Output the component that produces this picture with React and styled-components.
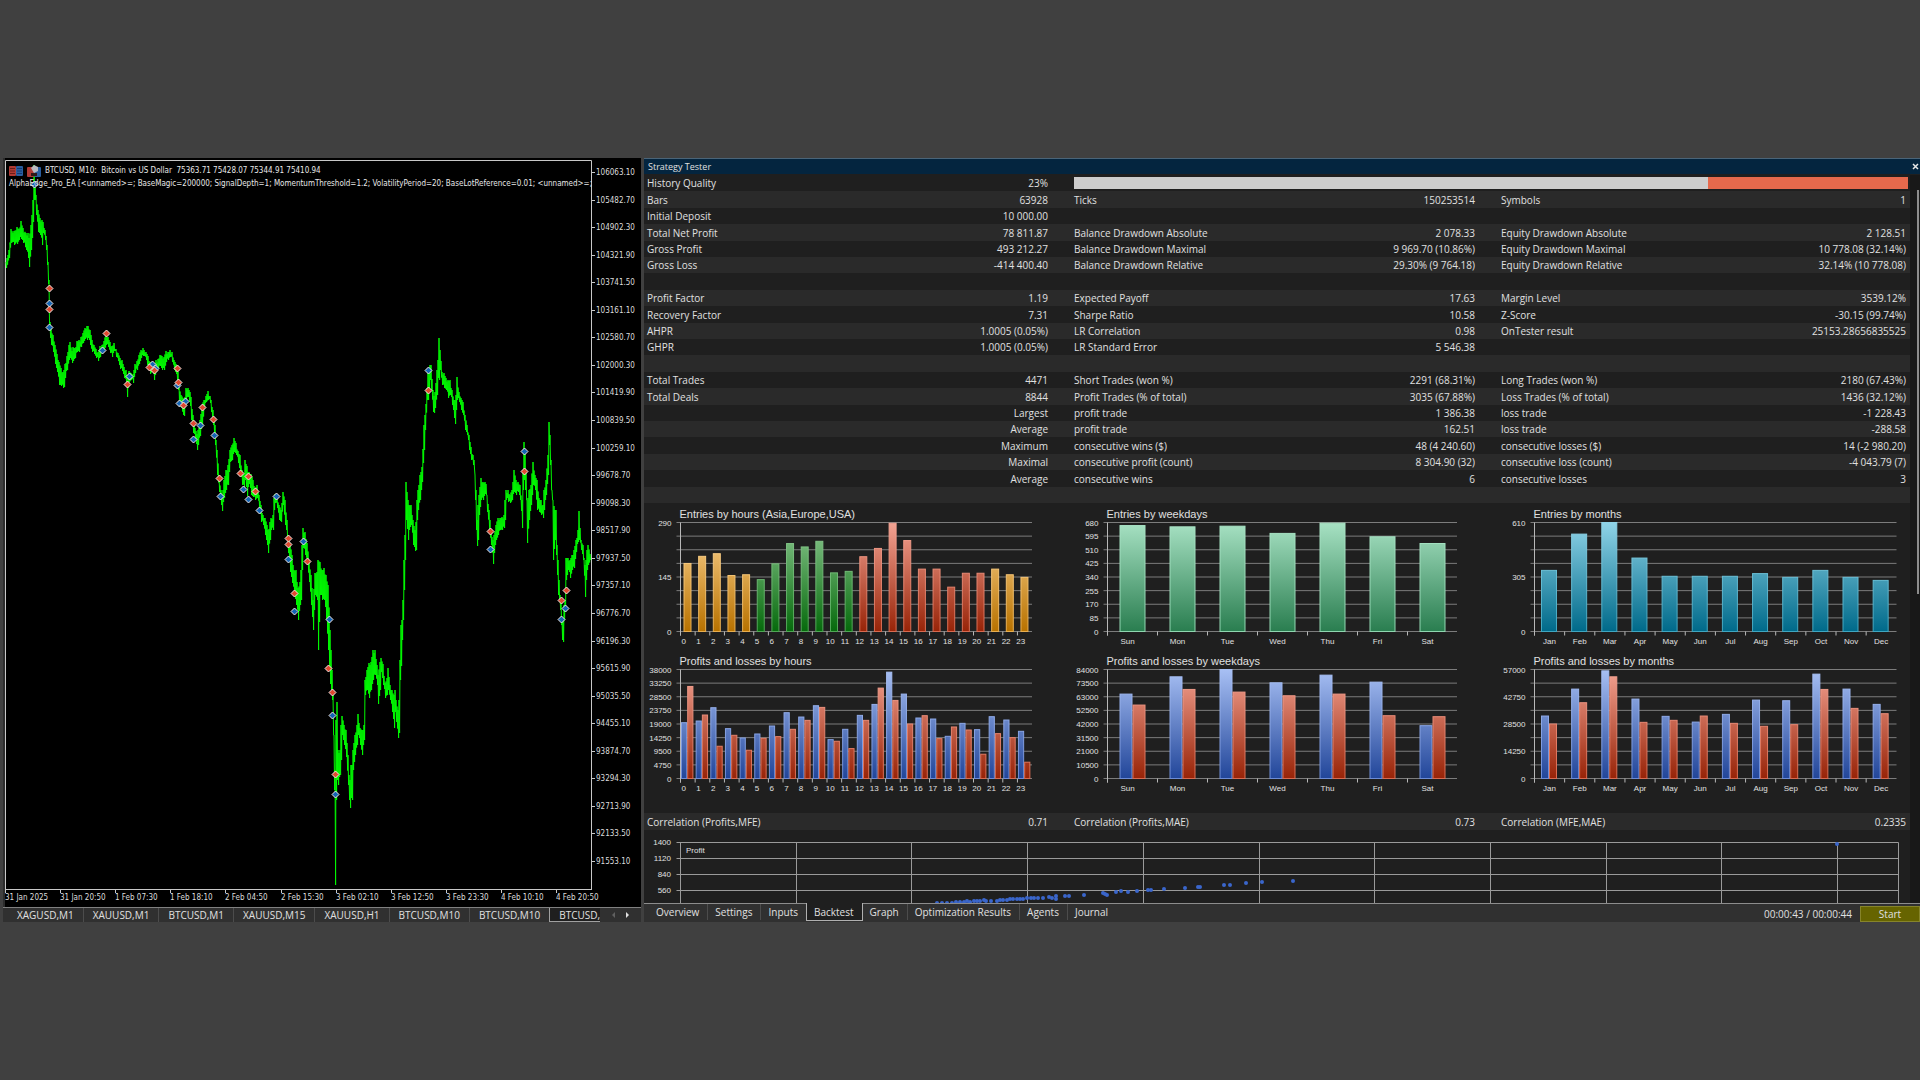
import React from 'react';
import styled, { createGlobalStyle } from 'styled-components';

const GlobalStyle = createGlobalStyle`
  * {
    box-sizing: border-box;
  }
  body {
    margin: 0;
    background: #404040;
    color: #e0e0e0;
    font-family: 'Open Sans', 'Noto Sans', sans-serif;
    font-size: 10px;
    line-height: 16px;
  }
`;

/* ---------- price chart data ---------- */

// x, high, low
const PRICE = [
  [6, 262, 268], [9, 250, 258], [11, 229, 243], [14, 231, 245], [17, 227, 244], [19, 229, 240],
  [21, 221, 239], [23, 228, 243], [26, 233, 250], [28, 233, 258], [29, 238, 267], [31, 225, 250],
  [32, 215, 238], [33, 200, 222], [34, 165, 200], [35, 183, 200], [36, 195, 215], [38, 210, 232],
  [40, 218, 235], [42, 220, 245], [43, 222, 233], [45, 230, 240], [46, 236, 250], [47, 245, 265],
  [48, 262, 284], [49, 280, 330], [50, 322, 338], [51, 326, 345], [53, 335, 352], [55, 345, 364],
  [57, 354, 372], [59, 362, 385], [61, 368, 386], [63, 372, 388], [64, 370, 387], [65, 364, 378],
  [67, 356, 370], [69, 345, 360], [70, 342, 358], [72, 351, 363], [73, 347, 361], [75, 348, 358],
  [77, 341, 352], [79, 340, 352], [81, 337, 347], [83, 333, 343], [85, 328, 339], [87, 326, 340],
  [88, 326, 338], [90, 330, 345], [92, 340, 352], [94, 345, 354], [96, 349, 358], [98, 352, 361],
  [100, 346, 357], [102, 345, 352], [104, 341, 350], [106, 334, 345], [108, 337, 347], [110, 342, 353],
  [112, 346, 357], [114, 343, 351], [116, 349, 357], [118, 353, 361], [120, 358, 369], [122, 360, 371],
  [124, 367, 378], [126, 370, 384], [127, 375, 397], [129, 371, 382], [131, 373, 380], [133, 374, 383],
  [135, 364, 373], [137, 361, 370], [139, 355, 364], [141, 350, 358], [143, 348, 356], [144, 350, 356],
  [146, 352, 360], [148, 356, 370], [150, 362, 374], [152, 362, 372], [154, 366, 380], [156, 360, 372],
  [158, 359, 368], [160, 355, 366], [162, 356, 370], [164, 357, 370], [166, 351, 362], [168, 352, 360],
  [170, 350, 357], [172, 352, 362], [174, 360, 370], [176, 364, 374], [178, 372, 390], [179, 385, 405],
  [181, 395, 408], [183, 398, 415], [184, 400, 416], [186, 388, 400], [188, 388, 397], [190, 392, 406],
  [191, 397, 420], [193, 415, 433], [195, 428, 438], [197, 434, 450], [198, 430, 445], [200, 420, 436],
  [202, 405, 425], [204, 400, 408], [206, 396, 402], [208, 391, 400], [210, 396, 403], [211, 400, 412],
  [213, 410, 425], [215, 425, 445], [217, 450, 475], [219, 475, 492], [221, 490, 505], [222, 495, 511],
  [224, 480, 498], [226, 470, 490], [228, 465, 485], [230, 450, 462], [232, 445, 460], [234, 438, 452],
  [236, 443, 455], [238, 451, 463], [240, 455, 475], [242, 470, 485], [244, 474, 487], [245, 460, 480],
  [247, 466, 496], [249, 472, 484], [251, 474, 495], [253, 480, 497], [255, 488, 500], [257, 485, 498],
  [259, 495, 508], [261, 505, 522], [263, 515, 525], [265, 518, 535], [267, 525, 545], [268, 530, 553],
  [270, 522, 540], [271, 518, 530], [273, 515, 530], [274, 498, 510], [275, 494, 503], [277, 497, 508],
  [279, 505, 520], [281, 510, 522], [283, 492, 505], [285, 500, 525], [287, 520, 540], [288, 535, 553],
  [290, 543, 572], [292, 555, 583], [294, 570, 595], [296, 570, 605], [298, 588, 620], [300, 582, 605],
  [301, 570, 600], [302, 545, 570], [303, 528, 548], [305, 532, 555], [307, 543, 563], [309, 560, 582],
  [311, 575, 605], [313, 600, 630], [315, 573, 595], [317, 572, 600], [318, 560, 650], [320, 562, 595],
  [322, 570, 600], [324, 568, 600], [326, 575, 620], [328, 585, 650], [330, 630, 684], [331, 650, 690],
  [332, 670, 700], [333, 695, 735], [334, 735, 790], [335, 770, 885], [336, 720, 800], [337, 702, 780],
  [338, 750, 785], [340, 750, 775], [341, 725, 760], [342, 716, 735], [344, 725, 745], [346, 730, 757],
  [348, 755, 785], [349, 775, 800], [350, 780, 808], [351, 765, 798], [352, 765, 800], [353, 750, 770],
  [355, 735, 755], [357, 725, 745], [358, 714, 735], [360, 728, 745], [362, 730, 755], [364, 725, 740],
  [365, 680, 695], [367, 670, 690], [369, 663, 698], [371, 662, 690], [373, 650, 680], [375, 650, 675],
  [377, 665, 685], [378, 675, 704], [380, 662, 690], [381, 658, 672], [383, 664, 685], [385, 683, 698],
  [387, 678, 695], [388, 668, 690], [390, 685, 700], [392, 690, 712], [394, 695, 728], [395, 690, 712],
  [396, 700, 722], [398, 710, 738], [399, 700, 733], [400, 660, 680], [401, 625, 666], [402, 620, 640],
  [403, 600, 620], [404, 560, 590], [405, 535, 560], [406, 482, 520], [408, 500, 540], [409, 505, 530],
  [411, 505, 525], [413, 520, 545], [415, 530, 551], [416, 522, 550], [417, 500, 520], [418, 490, 510],
  [420, 475, 500], [422, 467, 482], [424, 425, 450], [425, 415, 430], [427, 388, 400], [428, 370, 400],
  [430, 365, 380], [431, 365, 390], [433, 390, 412], [434, 396, 413], [435, 392, 408], [437, 370, 395],
  [438, 360, 378], [439, 338, 380], [440, 350, 370], [442, 372, 385], [444, 373, 388], [446, 378, 390],
  [448, 380, 398], [450, 380, 395], [452, 390, 405], [454, 400, 418], [455, 400, 424], [456, 395, 410],
  [457, 377, 400], [459, 392, 402], [461, 398, 410], [463, 402, 415], [465, 415, 430], [467, 425, 435],
  [469, 435, 450], [471, 447, 460], [473, 455, 465], [474, 460, 470], [475, 475, 500], [476, 490, 530],
  [477, 520, 546], [478, 505, 540], [479, 495, 515], [481, 478, 500], [483, 482, 500], [485, 482, 494],
  [486, 484, 495], [487, 495, 512], [489, 510, 530], [491, 530, 545], [493, 540, 564], [494, 535, 553],
  [496, 525, 540], [498, 518, 535], [500, 518, 530], [502, 517, 530], [504, 515, 528], [505, 500, 520],
  [506, 490, 500], [508, 490, 502], [510, 495, 503], [512, 490, 500], [514, 470, 492], [516, 480, 495],
  [518, 482, 492], [520, 485, 500], [522, 500, 528], [523, 470, 490], [524, 442, 480], [525, 450, 490],
  [526, 470, 500], [527, 500, 543], [529, 490, 520], [531, 485, 505], [533, 462, 485], [535, 475, 490],
  [537, 480, 510], [539, 498, 512], [541, 500, 515], [543, 505, 518], [544, 490, 510], [546, 480, 495],
  [548, 455, 475], [549, 422, 445], [550, 435, 465], [551, 460, 490], [552, 490, 500], [553, 500, 560],
  [555, 510, 540], [556, 510, 555], [557, 545, 575], [558, 560, 595], [560, 595, 610], [561, 600, 625],
  [562, 620, 640], [563, 618, 642], [564, 605, 620], [565, 600, 612], [566, 558, 580], [568, 558, 570],
  [570, 560, 578], [572, 555, 570], [574, 550, 568], [576, 540, 552], [578, 530, 542], [579, 511, 540],
  [581, 540, 550], [583, 545, 560], [585, 565, 597], [586, 560, 580], [587, 550, 570], [588, 545, 565],
  [590, 552, 562],
];

const SELLS = [
  [49, 288], [49, 309], [106, 333], [127, 384], [149, 367], [154, 370], [177, 368], [178, 382],
  [183, 405], [193, 423], [202, 407], [213, 419], [219, 478], [240, 473], [248, 476], [255, 491],
  [288, 538], [288, 544], [294, 593], [307, 561], [328, 668], [332, 692], [335, 774], [428, 390],
  [490, 531], [524, 471], [566, 590], [561, 600],
];

const BUYS = [
  [34, 184], [49, 303], [49, 327], [102, 350], [129, 376], [152, 364], [155, 368], [177, 385],
  [179, 403], [185, 401], [193, 439], [200, 425], [214, 435], [220, 496], [243, 489], [248, 499],
  [259, 510], [276, 496], [288, 559], [294, 611], [303, 541], [329, 619], [332, 715], [335, 794],
  [428, 370], [490, 549], [524, 451], [565, 608], [561, 619],
];

const TIMES = [
  '31 Jan 2025', '31 Jan 20:50', '1 Feb 07:30', '1 Feb 18:10', '2 Feb 04:50', '2 Feb 15:30',
  '3 Feb 02:10', '3 Feb 12:50', '3 Feb 23:30', '4 Feb 10:10', '4 Feb 20:50',
];

const PRICE_LEVELS = Array.from({ length: 26 }, (_, i) => (106063.1 - i * 580.4).toFixed(2));

// zig-zags between the highs and the lows, one stroke for each pixel column
function pricePath() {
  const parts = [];
  let k = 0;
  for (let x = 6; x < 591; x++) {
    while (k < PRICE.length - 2 && PRICE[k + 1][0] <= x) k++;
    const [x0, h0, l0] = PRICE[k];
    const [x1, h1, l1] = PRICE[k + 1];
    const t = Math.min(1, (x - x0) / (x1 - x0));
    const high = h0 + (h1 - h0) * t;
    const low = l0 + (l1 - l0) * t;
    const shake = x === x0 ? 0 : ((x * 37) % 7) / 2;
    parts.push(`${x} ${high + shake} ${x}.6 ${low - shake}`);
  }
  return `M${parts.join(' L')}`;
}

const PRICE_PATH = pricePath();

/* ---------- tester report data ---------- */

const REPORT = [
  ['History Quality', '23%', 'bar'],
  ['Bars', '63928', 'Ticks', '150253514', 'Symbols', '1'],
  ['Initial Deposit', '10 000.00', '', '', '', ''],
  ['Total Net Profit', '78 811.87', 'Balance Drawdown Absolute', '2 078.33', 'Equity Drawdown Absolute', '2 128.51'],
  ['Gross Profit', '493 212.27', 'Balance Drawdown Maximal', '9 969.70 (10.86%)', 'Equity Drawdown Maximal', '10 778.08 (32.14%)'],
  ['Gross Loss', '-414 400.40', 'Balance Drawdown Relative', '29.30% (9 764.18)', 'Equity Drawdown Relative', '32.14% (10 778.08)'],
  ['', '', '', '', '', ''],
  ['Profit Factor', '1.19', 'Expected Payoff', '17.63', 'Margin Level', '3539.12%'],
  ['Recovery Factor', '7.31', 'Sharpe Ratio', '10.58', 'Z-Score', '-30.15 (99.74%)'],
  ['AHPR', '1.0005 (0.05%)', 'LR Correlation', '0.98', 'OnTester result', '25153.28656835525'],
  ['GHPR', '1.0005 (0.05%)', 'LR Standard Error', '5 546.38', '', ''],
  ['', '', '', '', '', ''],
  ['Total Trades', '4471', 'Short Trades (won %)', '2291 (68.31%)', 'Long Trades (won %)', '2180 (67.43%)'],
  ['Total Deals', '8844', 'Profit Trades (% of total)', '3035 (67.88%)', 'Loss Trades (% of total)', '1436 (32.12%)'],
  ['', 'Largest', 'profit trade', '1 386.38', 'loss trade', '-1 228.43'],
  ['', 'Average', 'profit trade', '162.51', 'loss trade', '-288.58'],
  ['', 'Maximum', 'consecutive wins ($)', '48 (4 240.60)', 'consecutive losses ($)', '14 (-2 980.20)'],
  ['', 'Maximal', 'consecutive profit (count)', '8 304.90 (32)', 'consecutive loss (count)', '-4 043.79 (7)'],
  ['', 'Average', 'consecutive wins', '6', 'consecutive losses', '3'],
  ['', '', '', '', '', ''],
];

const CORRELATION = [
  ['Correlation (Profits,MFE)', '0.71', 'Correlation (Profits,MAE)', '0.73', 'Correlation (MFE,MAE)', '0.2335'],
];

const HOURS = Array.from({ length: 24 }, (_, i) => String(i));
const WEEKDAYS = ['Sun', 'Mon', 'Tue', 'Wed', 'Thu', 'Fri', 'Sat'];
const MONTHS = ['Jan', 'Feb', 'Mar', 'Apr', 'May', 'Jun', 'Jul', 'Aug', 'Sep', 'Oct', 'Nov', 'Dec'];

const HOUR_AXIS = { width: 427, left: 36.5, right: 388, labels: HOURS, slot: 14.65, shift: -4 };
const WEEKDAY_AXIS = { width: 427, left: 36.5, right: 386, labels: WEEKDAYS, slot: 50, shift: -5 };
const MONTH_AXIS = { width: 412, left: 36.5, right: 398.5, labels: MONTHS, slot: 30.15, shift: 0 };

const CHARTS = [
  {
    ...HOUR_AXIS,
    title: 'Entries by hours (Asia,Europe,USA)',
    max: 290,
    levels: 2,
    offset: 3,
    barWidth: 8,
    series: [
      {
        color: (i) => (i < 5 || i > 20 ? 'amber' : i < 12 ? 'green' : 'red'),
        values: [181, 200, 207, 149, 151, 138, 180, 234, 225, 240, 156, 160, 199, 221, 288, 242, 166, 166, 118, 155, 155, 166, 151, 144],
      },
    ],
  },
  {
    ...WEEKDAY_AXIS,
    title: 'Entries by weekdays',
    max: 680,
    levels: 8,
    offset: 12,
    barWidth: 26,
    series: [{ color: () => 'mint', values: [661, 653, 657, 612, 676, 591, 549] }],
  },
  {
    ...MONTH_AXIS,
    title: 'Entries by months',
    max: 610,
    levels: 2,
    offset: 6.5,
    barWidth: 16,
    series: [{ color: () => 'teal', values: [342, 545, 610, 411, 309, 309, 309, 324, 303, 342, 303, 286] }],
  },
  {
    ...HOUR_AXIS,
    title: 'Profits and losses by hours',
    max: 38000,
    levels: 8,
    offset: 0.5,
    barWidth: 6.2,
    series: [
      {
        color: () => 'blue',
        values: [19460, 20040, 24680, 17380, 14130, 15520, 18300, 22940, 21430, 25370, 13550, 17150, 22010, 25830, 37070, 29430, 21090, 20740, 14710, 19230, 17030, 21550, 20390, 16450],
      },
      {
        color: () => 'red',
        values: [32090, 22130, 11240, 15060, 9850, 14020, 14600, 17150, 20270, 24790, 12980, 10430, 20270, 31510, 27220, 19000, 21900, 13900, 17960, 16910, 8460, 15640, 14250, 5680],
      },
    ],
  },
  {
    ...WEEKDAY_AXIS,
    title: 'Profits and losses by weekdays',
    max: 84000,
    levels: 8,
    offset: 12,
    barWidth: 13,
    series: [
      { color: () => 'blue', values: [65050, 78370, 84000, 73760, 79650, 74270, 40720] },
      { color: () => 'red', values: [56600, 68640, 66590, 63770, 65050, 48400, 47640] },
    ],
  },
  {
    ...MONTH_AXIS,
    title: 'Profits and losses by months',
    max: 57000,
    levels: 4,
    offset: 6.5,
    barWidth: 8,
    series: [
      { color: () => 'blue', values: [32670, 46750, 56300, 41540, 32500, 29500, 33540, 41000, 40670, 54570, 46750, 38760] },
      { color: () => 'red', values: [28500, 39630, 53180, 29370, 30420, 32670, 28850, 27290, 28160, 46580, 36670, 33890] },
    ],
  },
];

const GRADIENTS = {
  amber: ['#ffd796', '#b87200', '#e8ae50'],
  green: ['#8cc890', '#066a0c', '#4fa655'],
  red: ['#f4a494', '#982408', '#d86a50'],
  mint: ['#a8e2c4', '#2a7e50', '#8fd6b0'],
  teal: ['#90d4e8', '#006a8a', '#3fa6c0'],
  blue: ['#a8c0f4', '#22469a', '#6d8cd6'],
};

const POINTS = [
  [293, 73], [298, 73], [303, 73], [308, 73], [312, 72], [316, 72], [320, 72], [323, 71], [326, 72],
  [330, 71], [333, 71], [336, 71], [340, 70], [342, 71], [347, 71], [353, 71], [356, 70], [359, 70],
  [363, 70], [366, 69], [369, 69], [373, 69], [376, 69], [379, 69], [383, 68], [387, 68], [390, 68],
  [394, 68], [399, 68], [405, 67], [408, 68], [412, 66], [412, 69], [421, 66], [425, 66], [440, 65],
  [459, 63], [461, 64], [463, 65], [472, 62], [477, 61], [484, 62], [493, 61], [504, 60], [507, 60],
  [520, 59], [541, 58], [554, 57], [556, 57], [580, 55], [586, 55], [602, 53], [618, 52], [649, 51],
  [1193, 14],
];

/* ---------- drawings ---------- */

function PriceChart() {
  return (
    <PriceSvg viewBox='5 158 636 749' role='img' aria-label='BTCUSD, M10'>
      <g stroke='#c8c8c8' fill='none'>
        <path d='M5.5 891 V160.5 H591.5 V889.5 M5 889.5 H592' />
        {PRICE_LEVELS.map((level, i) => (
          <path key={level} d={`M591 ${Math.round(172 + i * 27.56)}.5 h4`} />
        ))}
        {TIMES.map((time, i) => (
          <path key={time} d={`M${Math.round(5 + i * 55.1)}.5 889 v4`} />
        ))}
      </g>
      <path d={PRICE_PATH} fill='none' stroke='#00f800' strokeWidth='1' />
      {BUYS.map(([x, y]) => (
        <Marker key={`b${x}-${y}`} d={`M${x}.5 ${y - 3} l3.5 3.5 l-3.5 3.5 l-3.5 -3.5 z`} fill='#1464b4' />
      ))}
      {SELLS.map(([x, y]) => (
        <Marker key={`s${x}-${y}`} d={`M${x}.5 ${y - 3} l3.5 3.5 l-3.5 3.5 l-3.5 -3.5 z`} fill='#e04830' />
      ))}
      {PRICE_LEVELS.map((level, i) => (
        <text key={level} x='596' y={Math.round(175 + i * 27.56)}>
          {level}
        </text>
      ))}
      {TIMES.map((time, i) => (
        <text key={time} x={Math.round(5 + i * 55.1)} y='900'>
          {time}
        </text>
      ))}
    </PriceSvg>
  );
}

function BarChart({ width, left, right, labels, slot, shift, title, max, levels, offset, barWidth, series }) {
  const top = 19.5;
  const height = 109;
  const bottom = top + height;
  const every = 8 / levels;
  return (
    <ChartSvg viewBox={`0 0 ${width} 147`} role='img' aria-label={title}>
      <text className='title' x={left - 1} y='15'>
        {title}
      </text>
      <g stroke='#7c7c7c'>
        {Array.from({ length: 9 }, (_, i) => (
          <path key={i} d={`M${left - 4} ${top + (i * height) / 8} H${right}`} />
        ))}
      </g>
      <path d={`M${left} ${top} V${bottom + 4}`} stroke='#b8b8b8' />
      {labels.map((label, i) => (
        <path key={label} d={`M${left + i * slot} ${bottom} v4`} stroke='#b8b8b8' />
      ))}
      {series.map(({ color, values }, s) =>
        values.map((value, i) => {
          const h = (value / max) * height;
          return (
            <rect
              key={`${s}-${i}`}
              x={left + i * slot + offset + s * barWidth + 0.5}
              y={bottom - h}
              width={barWidth - 1}
              height={h}
              fill={`url(#fill-${color(i)})`}
              stroke={`url(#edge-${color(i)})`}
            />
          );
        })
      )}
      {Array.from({ length: levels + 1 }, (_, i) => (
        <text key={i} x={left - 9} y={top + (i * every * height) / 8 + 3} textAnchor='end'>
          {Math.round(max - (max * i) / levels)}
        </text>
      ))}
      {labels.map((label, i) => (
        <text key={label} x={left + (i + 0.5) * slot + shift} y='141' textAnchor='middle'>
          {label}
        </text>
      ))}
    </ChartSvg>
  );
}

// shared by all of the bar charts; the shade depends on the height above the axis
function ChartFills() {
  return (
    <Defs aria-hidden='true'>
      {Object.entries(GRADIENTS).map(([name, [light, dark, edge]]) => (
        <React.Fragment key={name}>
          <linearGradient id={`fill-${name}`} gradientUnits='userSpaceOnUse' x1='0' x2='0' y1='19' y2='128'>
            <stop stopColor={light} />
            <stop offset='1' stopColor={dark} />
          </linearGradient>
          <linearGradient id={`edge-${name}`} gradientUnits='userSpaceOnUse' x1='0' x2='0' y1='19' y2='128'>
            <stop stopColor={light} />
            <stop offset='1' stopColor={edge} />
          </linearGradient>
        </React.Fragment>
      ))}
    </Defs>
  );
}

function ScatterChart() {
  return (
    <ChartSvg viewBox='0 0 1266 73' role='img' aria-label='Profit'>
      <g stroke='#9a9a9a'>
        {[12.5, 28.5, 44.5, 60.5].map((y) => (
          <path key={y} d={`M32.5 ${y} H1254.5`} />
        ))}
        {Array.from({ length: 11 }, (_, i) => (
          <path key={i} d={`M${Math.round(36 + i * 115.7)}.5 12.5 V73`} />
        ))}
        <path d='M1254.5 12.5 V73' />
      </g>
      <g fill='#3a66cc'>
        {POINTS.map(([x, y]) => (
          <circle key={`${x}-${y}`} cx={x} cy={y} r='2' />
        ))}
      </g>
      {[1400, 1120, 840, 560, 280].map((level, i) => (
        <text key={level} x='27' y={15 + i * 16} textAnchor='end'>
          {level}
        </text>
      ))}
      <text x='42' y='23'>
        Profit
      </text>
    </ChartSvg>
  );
}

function DepthIcon() {
  return (
    <svg width='14' height='10' viewBox='0 0 14 10' aria-hidden='true'>
      <rect width='7' height='10' rx='1' fill='#b03a34' />
      <rect x='7' width='7' height='10' rx='1' fill='#2a5ea0' />
      <path d='M1 2.5h5M1 5h5M1 7.5h5' stroke='#6a1c18' />
      <path d='M8 2.5h5M8 5h5M8 7.5h5' stroke='#123a70' />
    </svg>
  );
}

function ExpertIcon() {
  return (
    <svg width='14' height='12' viewBox='0 0 14 12' aria-hidden='true'>
      <rect y='2' width='7' height='10' rx='1' fill='#b03a34' />
      <rect x='7' y='2' width='7' height='10' rx='1' fill='#2a5ea0' />
      <path d='M4 3l3-3l4 2v4l-4 2z' fill='#b8b8c0' />
      <path d='M4 8h6v3h-6z' fill='#301818' />
    </svg>
  );
}

function ArrowIcon({ left }) {
  return (
    <svg width='4' height='6' viewBox='0 0 4 6' aria-hidden='true'>
      <path d={left ? 'M4 0v6l-3-3z' : 'M0 0v6l3-3z'} fill='currentColor' />
    </svg>
  );
}

/* ---------- page ---------- */

function ReportTable({ rows, label }) {
  return (
    <Table aria-label={label}>
      <colgroup>
        <col style={{ width: '20%' }} />
        <col style={{ width: '13.73%' }} />
        <col style={{ width: '20%' }} />
        <col style={{ width: '13.73%' }} />
        <col style={{ width: '19%' }} />
        <col />
      </colgroup>
      <tbody>
        {rows.map((row, i) => (
          <tr key={i}>
            {row.map((cell, c) =>
              cell === 'bar' ? (
                <td key={c} colSpan='4'>
                  <Quality>
                    <QualityPart $share={76} $color='#cdcdcd' />
                    <QualityPart $share={24} $color='#e6694c' />
                  </Quality>
                </td>
              ) : (
                <Cell key={c} $value={c % 2 === 1} $last={c === 5}>
                  {cell}
                </Cell>
              )
            )}
          </tr>
        ))}
      </tbody>
    </Table>
  );
}

function App() {
  return (
    <Desktop>
      <GlobalStyle />
      <ChartWindow>
        <ChartArea>
          <PriceChart />
          <ChartHeader>
            <ChartTitle>
              <DepthIcon />
              <ExpertIcon />
              <span>BTCUSD, M10:&nbsp; Bitcoin vs US Dollar&nbsp; 75363.71 75428.07 75344.91 75410.94</span>
            </ChartTitle>
            <Inputs>
              AlphaEdge_Pro_EA [&lt;unnamed&gt;=; BaseMagic=200000; SignalDepth=1; MomentumThreshold=1.2;
              VolatilityPeriod=20; BaseLotReference=0.01; &lt;unnamed&gt;=;
            </Inputs>
          </ChartHeader>
        </ChartArea>
        <SymbolTabs>
          {['XAGUSD,M1', 'XAUUSD,M1', 'BTCUSD,M1', 'XAUUSD,M15', 'XAUUSD,H1', 'BTCUSD,M10', 'BTCUSD,M10'].map(
            (name, i) => (
              <SymbolTab key={i}>{name}</SymbolTab>
            )
          )}
          <OpenSymbolTab>BTCUSD,</OpenSymbolTab>
          <TabArrow aria-label='Scroll tabs left' $dim>
            <ArrowIcon left />
          </TabArrow>
          <TabArrow aria-label='Scroll tabs right'>
            <ArrowIcon />
          </TabArrow>
        </SymbolTabs>
      </ChartWindow>
      <Tester>
        <TitleBar>
          Strategy Tester
          <Close aria-label='Close'>
            <svg width='7' height='7' viewBox='0 0 7 7' aria-hidden='true'>
              <path d='M1 1l5 5M6 1l-5 5' stroke='#e8e8e8' strokeWidth='1.5' />
            </svg>
          </Close>
        </TitleBar>
        <Body>
          <Report>
            <ReportTable rows={REPORT} label='Backtest results' />
            <ChartFills />
            <Charts>
              {CHARTS.map((chart) => (
                <BarChart key={chart.title} {...chart} />
              ))}
            </Charts>
            <CorrelationRow>
              <ReportTable rows={CORRELATION} label='Correlation' />
            </CorrelationRow>
            <ScatterChart />
          </Report>
          <Scroll>
            <Thumb />
          </Scroll>
        </Body>
        <Footer>
          {['Overview', 'Settings', 'Inputs', 'Backtest', 'Graph', 'Optimization Results', 'Agents', 'Journal'].map(
            (name) => (
              <TesterTab
                key={name}
                $active={name === 'Backtest'}
                $plain={name === 'Inputs' || name === 'Journal'}
              >
                {name}
              </TesterTab>
            )
          )}
          <Elapsed>00:00:43 / 00:00:44</Elapsed>
          <Start>Start</Start>
        </Footer>
      </Tester>
    </Desktop>
  );
}

const Desktop = styled.main`
  display: grid;
  grid-template-columns: 641fr 1276fr;
  align-items: center;
  gap: 3px;
  min-height: 100vh;
  background: #404040;
`;

const ChartWindow = styled.section`
  min-width: 0;
  padding-left: 3px;
`;

const ChartArea = styled.div`
  position: relative;
  padding-left: 2px;
  background: #2c2c2c;
`;

const PriceSvg = styled.svg`
  display: block;
  width: 100%;
  background: #000;

  text {
    fill: #dcdcdc;
    font-family: 'DejaVu Sans Condensed', 'DejaVu Sans', sans-serif;
    font-size: 8px;
  }
`;

const Marker = styled.path`
  stroke: #f0e4e0;
  stroke-width: 1;
`;

const ChartHeader = styled.header`
  position: absolute;
  top: 6px;
  left: 6px;
  right: 48px;
  color: #e8e8e8;
  font-family: 'DejaVu Sans Condensed', 'DejaVu Sans', sans-serif;
  font-size: 8px;
  line-height: 13px;
`;

const ChartTitle = styled.div`
  display: flex;
  align-items: center;
  gap: 4px;
`;

const Inputs = styled.div`
  white-space: nowrap;
`;

const SymbolTabs = styled.nav`
  display: flex;
  height: 15px;
  padding-left: 5px;
  background: #303030;
  border-top: 1px solid #808080;
  line-height: 14px;
`;

const Tab = styled.button`
  flex: none;
  padding: 0;
  border: 0;
  background: none;
  color: #e0e0e0;
  font: inherit;
`;

const SymbolTab = styled(Tab)`
  padding: 0 9px;
  border-right: 1px solid #4c4c4c;

  &:nth-last-of-type(4) {
    border-right: 0;
  }
`;

const OpenSymbolTab = styled(Tab)`
  padding: 0 0 0 9px;
  background: #1f1f1f;
  border: solid #a0a0a0;
  border-width: 0 0 1px 1px;
`;

const TabArrow = styled(Tab)`
  display: flex;
  align-items: center;
  justify-content: flex-end;
  width: 15px;
  color: ${(props) => (props.$dim ? '#606060' : '#e0e0e0')};
`;

const Tester = styled.section`
  min-width: 0;
  background: #1f1f1f;
`;

const TitleBar = styled.header`
  display: flex;
  align-items: center;
  justify-content: space-between;
  height: 16px;
  margin-bottom: 1px;
  padding-left: 4px;
  border-top: 1px solid #4a6478;
  background: #04253f;
  font-size: 9px;
`;

const Close = styled(Tab)`
  display: flex;
  padding-right: 1px;
`;

const Body = styled.div`
  display: flex;
`;

const Report = styled.div`
  flex: 1;
  min-width: 0;
`;

const Table = styled.table`
  width: 100%;
  table-layout: fixed;
  border-collapse: collapse;

  tr:nth-child(odd) {
    background: #1f1f1f;
  }
  tr:nth-child(even) {
    background: #2a2a2a;
  }
  tr {
    height: 16px;
  }
  tr:nth-child(5n + 2),
  tr:nth-child(5n + 4) {
    height: 17px;
  }
  td {
    padding: 0 2px 0 3px;
  }
`;

const Cell = styled.td`
  && {
    padding-right: ${(props) => (props.$last ? '4px' : props.$value ? '23px' : '0')};
    text-align: ${(props) => (props.$value ? 'right' : 'left')};
    white-space: nowrap;
  }
`;

const Quality = styled.div`
  display: flex;
  height: 12px;
`;

const QualityPart = styled.div`
  flex: ${(props) => props.$share};
  background: ${(props) => props.$color};
`;

const Charts = styled.div`
  display: grid;
  grid-template-columns: 427fr 427fr 412fr;
  margin-bottom: 16px;
`;

const ChartSvg = styled.svg`
  display: block;
  width: 100%;

  text {
    fill: #e0e0e0;
    font-family: 'Liberation Sans', Arial, sans-serif;
    font-size: 8px;
  }
  .title {
    font-size: 11px;
  }
`;

const Defs = styled.svg`
  position: absolute;
  width: 0;
  height: 0;
`;

const CorrelationRow = styled.div`
  tr:nth-child(odd) {
    height: 17px;
    background: #2a2a2a;
  }
`;

const Scroll = styled.div`
  width: 10px;
  padding-top: 15px;
  background: #181818;
`;

const Thumb = styled.div`
  width: 2px;
  height: 404px;
  margin-left: 7px;
  background: #8c8c8c;
`;

const Footer = styled.footer`
  display: flex;
  height: 19px;
  padding-left: 5px;
  background: #303030;
  border-top: 1px solid #8c8c8c;
`;

const TesterTab = styled(Tab)`
  height: 16px;
  padding: 0 8px 0 7px;
  border-right: ${(props) => (props.$plain ? '0' : '1px solid #4c4c4c')};
  ${(props) =>
    props.$active &&
    `
    height: 18px;
    margin-top: -1px;
    background: #1f1f1f;
    border: solid #b0b0b0;
    border-width: 0 1px 1px;
  `}
`;

const Elapsed = styled.span`
  margin: 2px 8px 0 auto;
`;

const Start = styled(Tab)`
  width: 60px;
  height: 16px;
  margin-top: 2px;
  line-height: 14px;
  background: #666400;
  border: 1px solid #86842a;
`;

export default App;
